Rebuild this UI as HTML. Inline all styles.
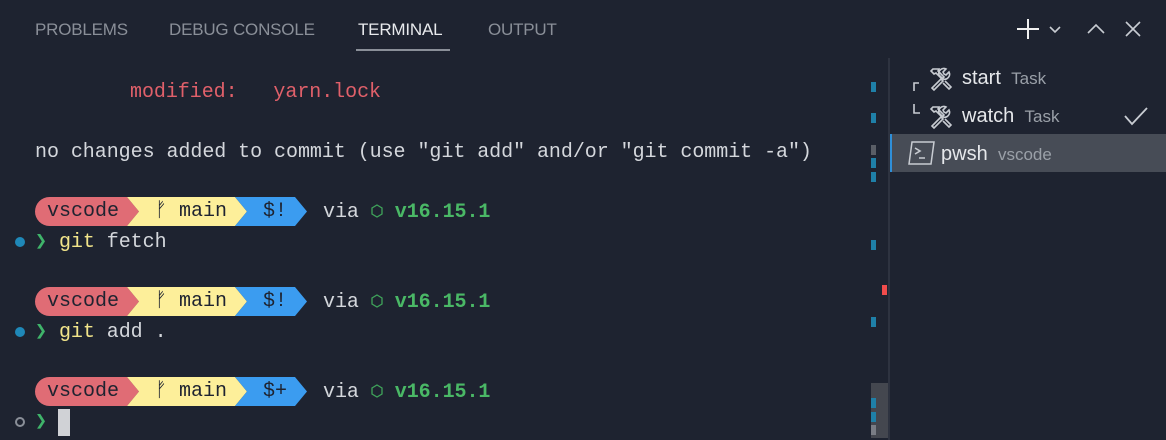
<!DOCTYPE html>
<html><head><style>
*{margin:0;padding:0;box-sizing:border-box}
body{width:1166px;height:440px;background:#1e2330;overflow:hidden;position:relative;font-family:"Liberation Sans",sans-serif}
.tab{position:absolute;top:20px;font-size:17px;color:#8a8f98;letter-spacing:-0.2px}
.mono{font-family:"Liberation Mono","DejaVu Sans Mono",monospace;font-size:20px;letter-spacing:-0.05px;position:absolute;white-space:pre;line-height:30px;color:#d4d7dc}
.seg{position:absolute;height:29px;font-family:"Liberation Mono",monospace;font-size:20px;line-height:29px;color:#1e2330;white-space:pre}
.r{background:#e06c75;border-radius:15px 0 0 15px;clip-path:polygon(0 0,calc(100% - 12px) 0,100% 50%,calc(100% - 12px) 100%,0 100%)}
.y{background:#fdef9a;clip-path:polygon(0 0,calc(100% - 12px) 0,100% 50%,calc(100% - 12px) 100%,0 100%,12px 50%)}
.b{background:#3b9cf0;clip-path:polygon(0 0,calc(100% - 12px) 0,100% 50%,calc(100% - 12px) 100%,0 100%,12px 50%)}
.mk{position:absolute;width:5px;height:10px;background:#1f80a8}
.side{position:absolute;font-size:20px;color:#e6e8eb}
.sub{font-size:17px;color:#9aa0a8}
.nd{display:inline-block;width:12px;height:14px;vertical-align:-1px}
</style></head><body>
<div class="tab" style="left:35px">PROBLEMS</div>
<div class="tab" style="left:169px">DEBUG CONSOLE</div>
<div class="tab" style="left:358px;color:#e8eaed">TERMINAL</div>
<div style="position:absolute;left:356px;top:49px;width:94px;height:2px;background:#8a8f98"></div>
<div class="tab" style="left:488px">OUTPUT</div>

<svg style="position:absolute;left:1010px;top:14px" width="150" height="30">
<path d="M18 5v20M7 15h22" stroke="#f0f0f0" stroke-width="2"/>
<path d="M40 13l5 5 5-5" stroke="#c8ccd2" stroke-width="1.6" fill="none"/>
<path d="M78 19l8-8 8 8" stroke="#c8ccd2" stroke-width="1.6" fill="none"/>
<path d="M116 8l14 14M130 8l-14 14" stroke="#c8ccd2" stroke-width="1.6" fill="none"/>
</svg>

<div class="mono" style="left:130px;top:78px;color:#e0606a">modified:   yarn.lock</div>
<div class="mono" style="left:35px;top:138px">no changes added to commit (use "git add" and/or "git commit -a")</div>

<div class="seg r" style="left:35px;top:197px;width:104px;padding-left:12px">vscode</div>
<div class="seg y" style="left:127px;top:197px;width:120px;padding-left:28px">ᚠ main</div>
<div class="seg b" style="left:235px;top:197px;width:72px;padding-left:28px">$!</div>
<div class="mono" style="left:323px;top:198px">via <svg class="nd" viewBox="0 0 12 14"><path d="M6 1l5 3v6l-5 3-5-3V4z" fill="none" stroke="#3fa35a" stroke-width="1.3"/></svg> <b style="color:#4ab866">v16.15.1</b></div>
<div style="position:absolute;left:15px;top:237px;width:10px;height:10px;border-radius:50%;background:#1f88b8"></div>
<div class="mono" style="left:35px;top:228px"><span style="color:#3fb46a">❯</span> <span style="color:#f2e58a">git</span> fetch</div>

<div class="seg r" style="left:35px;top:287px;width:104px;padding-left:12px">vscode</div>
<div class="seg y" style="left:127px;top:287px;width:120px;padding-left:28px">ᚠ main</div>
<div class="seg b" style="left:235px;top:287px;width:72px;padding-left:28px">$!</div>
<div class="mono" style="left:323px;top:288px">via <svg class="nd" viewBox="0 0 12 14"><path d="M6 1l5 3v6l-5 3-5-3V4z" fill="none" stroke="#3fa35a" stroke-width="1.3"/></svg> <b style="color:#4ab866">v16.15.1</b></div>
<div style="position:absolute;left:15px;top:327px;width:10px;height:10px;border-radius:50%;background:#1f88b8"></div>
<div class="mono" style="left:35px;top:318px"><span style="color:#3fb46a">❯</span> <span style="color:#f2e58a">git</span> add .</div>

<div class="seg r" style="left:35px;top:377px;width:104px;padding-left:12px">vscode</div>
<div class="seg y" style="left:127px;top:377px;width:120px;padding-left:28px">ᚠ main</div>
<div class="seg b" style="left:235px;top:377px;width:72px;padding-left:28px">$+</div>
<div class="mono" style="left:323px;top:378px">via <svg class="nd" viewBox="0 0 12 14"><path d="M6 1l5 3v6l-5 3-5-3V4z" fill="none" stroke="#3fa35a" stroke-width="1.3"/></svg> <b style="color:#4ab866">v16.15.1</b></div>
<div style="position:absolute;left:15px;top:417px;width:10px;height:10px;border-radius:50%;border:2px solid #8a8f98"></div>
<div class="mono" style="left:35px;top:408px;color:#3fb46a">❯</div>
<div style="position:absolute;left:58px;top:409px;width:12px;height:27px;background:#d0d2d6"></div>

<div style="position:absolute;left:871px;top:383px;width:17px;height:55px;background:#44474f"></div>
<div class="mk" style="left:871px;top:82px"></div>
<div class="mk" style="left:871px;top:113px"></div>
<div class="mk" style="left:871px;top:145px;background:#5a5e66"></div>
<div class="mk" style="left:871px;top:158px"></div>
<div class="mk" style="left:871px;top:172px"></div>
<div class="mk" style="left:871px;top:240px"></div>
<div class="mk" style="left:882px;top:285px;background:#f14c4c"></div>
<div class="mk" style="left:871px;top:317px"></div>
<div class="mk" style="left:871px;top:398px"></div>
<div class="mk" style="left:871px;top:412px"></div>
<div class="mk" style="left:871px;top:425px;background:#7a7d85"></div>
<div style="position:absolute;left:888px;top:58px;width:2px;height:382px;background:#2e3340"></div>

<div style="position:absolute;left:890px;top:134px;width:276px;height:38px;background:#474c56;border-left:2px solid #2f8fd8"></div>
<svg style="position:absolute;left:905px;top:62px" width="56" height="110" fill="none" stroke="#c8ccd2" stroke-width="1.6">
<path d="M9 29V21h5M9 42v9h6"/>
<g id="w" transform="translate(25,5)">
<path d="M2 21l2 2 9-9-2-2z"/>
<path d="M13 12a5 5 0 0 0 6-7l-3 3-2-1-1-2 3-3a5 5 0 0 0-7 6z"/>
<path d="M3 2l-2 2 3 3 2-1 6 6 2-2-6-6 1-2z"/>
<path d="M15 14l6 6-2 2-6-6"/>
</g>
<use href="#w" transform="translate(0,38)"/>
<path d="M7 80h22l-3 22H4z" stroke-width="1.5"/>
<path d="M10 86l5 3-5 3M14 96h6"/>
</svg>
<div class="side" style="left:962px;top:67px">start <span class="sub">&nbsp;Task</span></div>
<div class="side" style="left:962px;top:105px">watch <span class="sub">&nbsp;Task</span></div>
<svg style="position:absolute;left:1122px;top:104px" width="28" height="24"><path d="M3 12l7 8L25 4" stroke="#c8ccd2" stroke-width="1.8" fill="none"/></svg>
<div class="side" style="left:941px;top:143px">pwsh <span class="sub">&nbsp;vscode</span></div>
</body></html>
